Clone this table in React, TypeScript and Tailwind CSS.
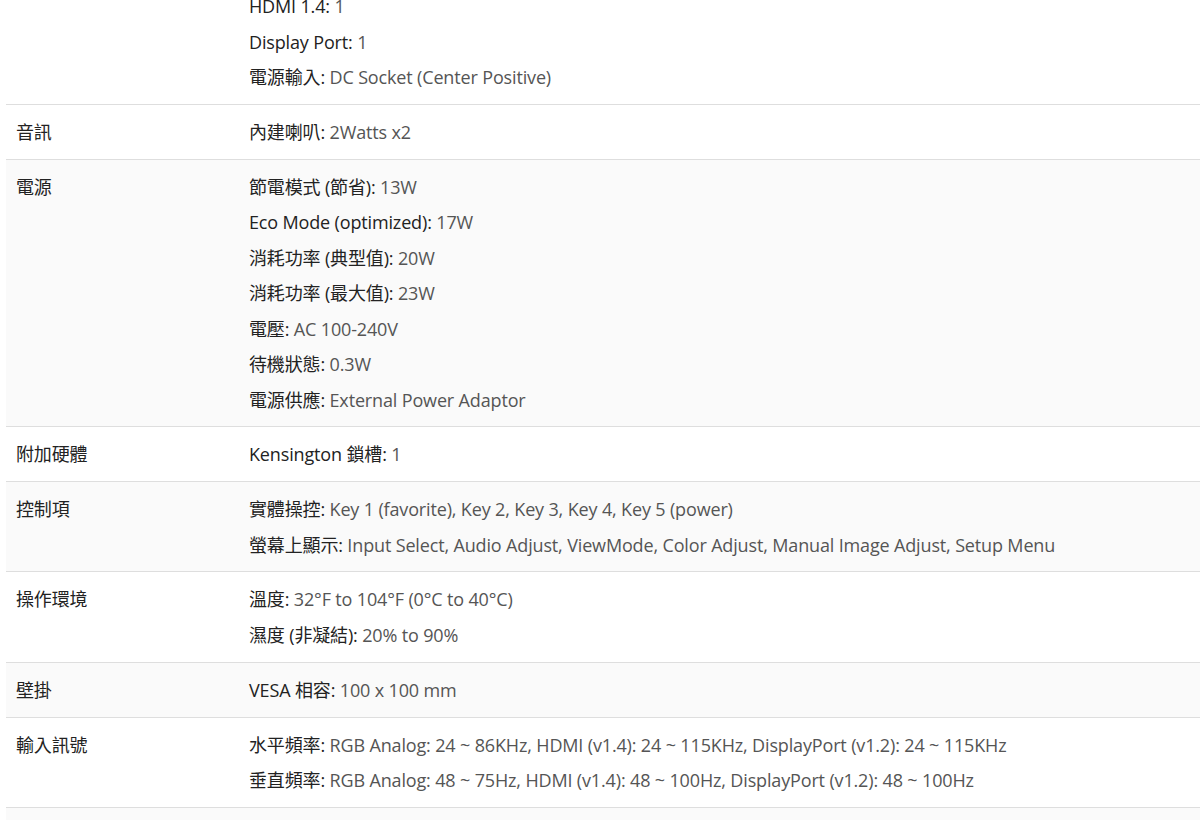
const rows: { label: string; gray: boolean; lines: [string, string][] }[] = [
  {
    label: '',
    gray: false,
    lines: [
      ['HDMI 1.4', '1'],
      ['Display Port', '1'],
      ['電源輸入', 'DC Socket (Center Positive)'],
    ],
  },
  { label: '音訊', gray: false, lines: [['內建喇叭', '2Watts x2']] },
  {
    label: '電源',
    gray: true,
    lines: [
      ['節電模式 (節省)', '13W'],
      ['Eco Mode (optimized)', '17W'],
      ['消耗功率 (典型值)', '20W'],
      ['消耗功率 (最大值)', '23W'],
      ['電壓', 'AC 100-240V'],
      ['待機狀態', '0.3W'],
      ['電源供應', 'External Power Adaptor'],
    ],
  },
  { label: '附加硬體', gray: false, lines: [['Kensington 鎖槽', '1']] },
  {
    label: '控制項',
    gray: true,
    lines: [
      ['實體操控', 'Key 1 (favorite), Key 2, Key 3, Key 4, Key 5 (power)'],
      ['螢幕上顯示', 'Input Select, Audio Adjust, ViewMode, Color Adjust, Manual Image Adjust, Setup Menu'],
    ],
  },
  {
    label: '操作環境',
    gray: false,
    lines: [
      ['溫度', '32°F to 104°F (0°C to 40°C)'],
      ['濕度 (非凝結)', '20% to 90%'],
    ],
  },
  { label: '壁掛', gray: true, lines: [['VESA 相容', '100 x 100 mm']] },
  {
    label: '輸入訊號',
    gray: false,
    lines: [
      ['水平頻率', 'RGB Analog: 24 ~ 86KHz, HDMI (v1.4): 24 ~ 115KHz, DisplayPort (v1.2): 24 ~ 115KHz'],
      ['垂直頻率', 'RGB Analog: 48 ~ 75Hz, HDMI (v1.4): 48 ~ 100Hz, DisplayPort (v1.2): 48 ~ 100Hz'],
    ],
  },
  { label: '', gray: true, lines: [['', '']] },
];

export default function App() {
  return (
    <div
      className="h-[820px] w-[1200px] overflow-hidden bg-white pl-[6px]"
      style={{ fontFamily: '"Open Sans", "Noto Sans CJK TC", sans-serif' }}
    >
      <div className="-mt-[21px] text-[18px] leading-[35.5px] tracking-[-0.15px]">
        {rows.map((r, i) => (
          <div
            key={i}
            className={`flex border-b border-[#dedede] pt-[10px] pb-[8.3px] ${r.gray ? 'bg-[#fafafa]' : 'bg-white'}`}
          >
            <div className="w-[233px] shrink-0 px-[10px] text-[#222]">{r.label}</div>
            <div className="flex-1 px-[10px]">
              {r.lines.map(([k, v], j) => (
                <div key={j} className="whitespace-nowrap">
                  {k && (
                    <>
                      <span className="text-[#222]">{k}: </span>
                      <span className="text-[#555]">{v}</span>
                    </>
                  )}
                </div>
              ))}
            </div>
          </div>
        ))}
      </div>
    </div>
  );
}
